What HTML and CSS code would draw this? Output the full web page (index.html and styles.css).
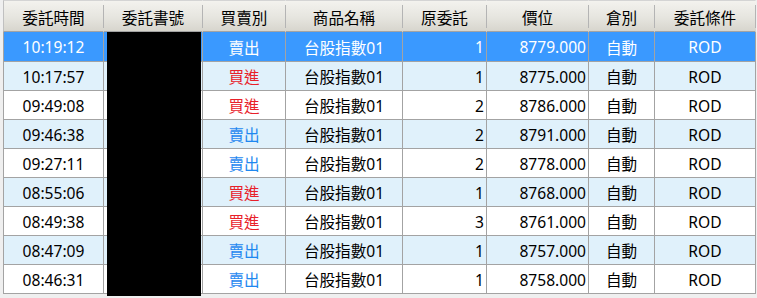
FILE: index.html
```html
<!DOCTYPE html>
<html lang="zh-Hant">
<head>
<meta charset="utf-8">
<title>委託查詢</title>
<link rel="stylesheet" href="styles.css">
</head>
<body>
<div class="grid-wrap">
  <table class="orders">
    <colgroup>
      <col class="c-time"><col class="c-no"><col class="c-side"><col class="c-name">
      <col class="c-qty"><col class="c-price"><col class="c-pos"><col class="c-cond">
    </colgroup>
    <thead>
      <tr>
        <th>委託時間</th><th>委託書號</th><th>買賣別</th><th>商品名稱</th>
        <th>原委託</th><th>價位</th><th>倉別</th><th>委託條件</th>
      </tr>
    </thead>
    <tbody>
      <tr class="selected first">
        <td>10:19:12</td><td></td><td class="sell">賣出</td><td>台股指數01</td>
        <td class="num">1</td><td class="num">8779.000</td><td>自動</td><td>ROD</td>
      </tr>
      <tr class="alt">
        <td>10:17:57</td><td></td><td class="buy">買進</td><td>台股指數01</td>
        <td class="num">1</td><td class="num">8775.000</td><td>自動</td><td>ROD</td>
      </tr>
      <tr>
        <td>09:49:08</td><td></td><td class="buy">買進</td><td>台股指數01</td>
        <td class="num">2</td><td class="num">8786.000</td><td>自動</td><td>ROD</td>
      </tr>
      <tr class="alt">
        <td>09:46:38</td><td></td><td class="sell">賣出</td><td>台股指數01</td>
        <td class="num">2</td><td class="num">8791.000</td><td>自動</td><td>ROD</td>
      </tr>
      <tr>
        <td>09:27:11</td><td></td><td class="sell">賣出</td><td>台股指數01</td>
        <td class="num">2</td><td class="num">8778.000</td><td>自動</td><td>ROD</td>
      </tr>
      <tr class="alt">
        <td>08:55:06</td><td></td><td class="buy">買進</td><td>台股指數01</td>
        <td class="num">1</td><td class="num">8768.000</td><td>自動</td><td>ROD</td>
      </tr>
      <tr>
        <td>08:49:38</td><td></td><td class="buy">買進</td><td>台股指數01</td>
        <td class="num">3</td><td class="num">8761.000</td><td>自動</td><td>ROD</td>
      </tr>
      <tr class="alt">
        <td>08:47:09</td><td></td><td class="sell">賣出</td><td>台股指數01</td>
        <td class="num">1</td><td class="num">8757.000</td><td>自動</td><td>ROD</td>
      </tr>
      <tr>
        <td>08:46:31</td><td></td><td class="sell">賣出</td><td>台股指數01</td>
        <td class="num">1</td><td class="num">8758.000</td><td>自動</td><td>ROD</td>
      </tr>
    </tbody>
  </table>
  <div class="redact"></div>
</div>
</body>
</html>
```
FILE: styles.css
```css
html, body {
  margin: 0;
  padding: 0;
  background: #efefef;
}
body {
  font-family: "Noto Sans", "Noto Sans CJK TC", sans-serif;
  font-size: 15.6px;
  color: #000;
}
.grid-wrap {
  position: relative;
  padding-left: 3px;
  width: 757px;
  height: 298px;
  box-sizing: border-box;
}
.orders {
  table-layout: fixed;
  border-collapse: separate;
  border-spacing: 0;
  width: 753px;
}
.c-time { width: 101px; }
.c-no { width: 99px; }
.c-side { width: 83px; }
.c-name { width: 117px; }
.c-qty { width: 84px; }
.c-price { width: 102px; }
.c-pos { width: 66px; }
.c-cond { width: 101px; }

.orders th {
  box-sizing: border-box;
  height: 32px;
  padding: 2px 0 0;
  font-weight: normal;
  text-align: center;
  white-space: nowrap;
  border-top: 1px solid #d4d4d4;
  border-bottom: 1px solid #a3a3a3;
  border-right: 1px solid transparent;
  background:
    linear-gradient(#b4b4b4, #b4b4b4) right 5px / 1px 23px no-repeat border-box,
    linear-gradient(#f4f3ef, #e6e5df 55%, #d6d4cc) border-box;
}
.orders th:first-child {
  border-left: 1px solid #c0c0c0;
}
.orders td {
  box-sizing: border-box;
  height: 29px;
  padding: 1px 2px 0;
  text-align: center;
  white-space: nowrap;
  overflow: hidden;
  border-right: 1px solid #a3a3a3;
  border-bottom: 1px solid #a3a3a3;
  background: #fff;
}
.orders tr.first td { height: 30px; }
.orders td:first-child {
  border-left: 1px solid #a3a3a3;
}
.orders td.num {
  text-align: right;
  padding-right: 2px;
}
.orders tr.alt td { background: #e0f1fb; }
.orders td.buy { color: #e8202a; }
.orders td.sell { color: #1e88f0; }
.orders tr.selected td {
  background: #3a99ff;
  color: #fff;
}
.redact {
  position: absolute;
  left: 107px;
  top: 32px;
  width: 94px;
  height: 264px;
  background: #000;
}
```
